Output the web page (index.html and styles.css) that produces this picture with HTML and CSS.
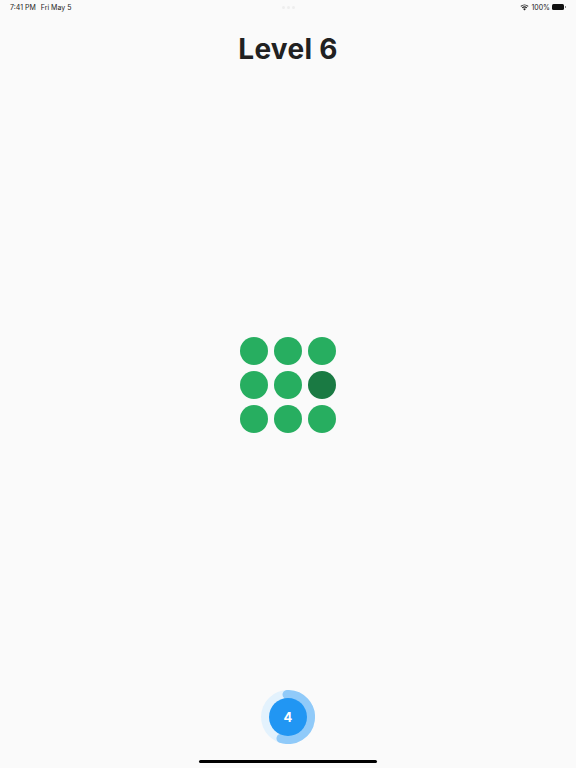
FILE: index.html
```html
<!DOCTYPE html>
<html lang="en">
<head>
    <meta charset="UTF-8">
    <meta name="viewport" content="width=device-width, initial-scale=1.0">
    <title>Level 6</title>
    <link rel="stylesheet" href="styles.css">
</head>
<body>
    <!-- Status bar -->
    <div class="status-bar">
        <div class="status-left">
            <span>7:41 PM</span>
            <span>Fri May 5</span>
        </div>
        <div class="status-dots">
            <span></span><span></span><span></span>
        </div>
        <div class="status-right">
            <svg class="wifi" viewBox="0 0 16 12" width="9" height="7">
                <path d="M8 11.5 5.6 8.7a3.4 3.4 0 0 1 4.8 0z" fill="#222"/>
                <path d="M4.5 7.4a5.2 5.2 0 0 1 7 0l1.3-1.5a7.2 7.2 0 0 0-9.6 0z" fill="#222"/>
                <path d="M2.2 4.8a8.7 8.7 0 0 1 11.6 0l1.4-1.6a10.8 10.8 0 0 0-14.4 0z" fill="#222"/>
            </svg>
            <span>100%</span>
            <div class="battery"></div>
        </div>
    </div>

    <h1 class="title">Level 6</h1>

    <!-- Game board -->
    <div class="board-wrap">
        <div class="board">
            <div class="dot"></div>
            <div class="dot"></div>
            <div class="dot"></div>
            <div class="dot"></div>
            <div class="dot"></div>
            <div class="dot dark"></div>
            <div class="dot"></div>
            <div class="dot"></div>
            <div class="dot"></div>
        </div>
    </div>

    <!-- Moves button -->
    <div class="moves-wrap">
        <div class="moves">
            <svg class="moves-arc" viewBox="0 0 54 54" width="54" height="54">
                <path d="M26 4.52A22.5 22.5 0 1 1 20 48.38" fill="none" stroke="#90caf9" stroke-width="9" stroke-linecap="round"/>
            </svg>
            <button class="moves-btn">4</button>
        </div>
    </div>

    <div class="home-indicator"></div>
</body>
</html>
```

FILE: styles.css
```css
* {
    box-sizing: border-box;
}

body {
    font-family: 'Inter', 'Liberation Sans', sans-serif;
    margin: 0;
    height: 768px;
    overflow: hidden;
    display: flex;
    flex-direction: column;
    background: #fafafa;
    color: #212121;
}

.status-bar {
    height: 14px;
    padding: 0 10px;
    display: flex;
    justify-content: space-between;
    align-items: center;
    position: relative;
    font-size: 7px;
    color: #222;
}

.status-left {
    display: flex;
    gap: 5px;
}

.status-dots {
    position: absolute;
    left: 282px;
    top: 6px;
    display: flex;
    gap: 2px;
}

.status-dots span {
    width: 3px;
    height: 3px;
    border-radius: 50%;
    background: #eeeeee;
}

.status-right {
    display: flex;
    align-items: center;
    gap: 2px;
}

.battery {
    width: 12px;
    height: 6px;
    margin-right: 2px;
    border-radius: 1.5px;
    background: #111;
    position: relative;
}

.battery::after {
    content: '';
    position: absolute;
    right: -2px;
    top: 2px;
    width: 1px;
    height: 2px;
    background: #888;
}

.title {
    margin: 18px 0 0;
    font-size: 28px;
    line-height: 34px;
    font-weight: 700;
    letter-spacing: 0.3px;
    text-align: center;
}

.board-wrap {
    flex: 1;
    display: flex;
    justify-content: center;
    align-items: flex-start;
    padding-top: 271px;
}

.board {
    display: grid;
    grid-template-columns: repeat(3, 28px);
    gap: 6px;
}

.dot {
    width: 28px;
    height: 28px;
    border-radius: 50%;
    background: #27ae60;
}

.dot.dark {
    background: #1a7a43;
}

.moves-wrap {
    display: flex;
    justify-content: center;
    padding-bottom: 24px;
}

.moves {
    width: 54px;
    height: 54px;
    border-radius: 50%;
    background: #e3f2fd;
    position: relative;
    display: flex;
    justify-content: center;
    align-items: center;
}

.moves-arc {
    position: absolute;
    left: 0;
    top: 0;
}

.moves-btn {
    width: 38px;
    height: 38px;
    border: none;
    border-radius: 50%;
    background: #2196f3;
    color: #fff;
    font-family: inherit;
    font-size: 13px;
    font-weight: 700;
    padding: 0;
    position: relative;
}

.home-indicator {
    position: absolute;
    left: 199px;
    top: 760px;
    width: 178px;
    height: 3px;
    border-radius: 2px;
    background: #000;
}
```
